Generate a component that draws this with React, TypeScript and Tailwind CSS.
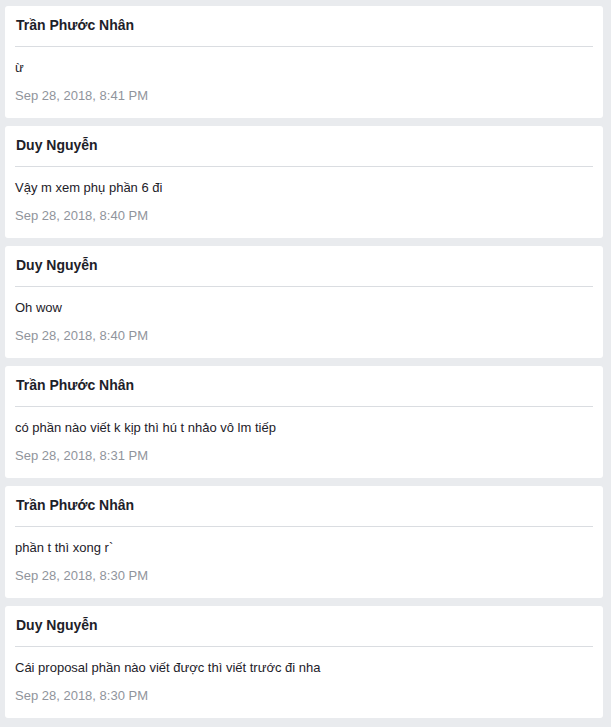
type Message = {
  author: string;
  text: string;
  time: string;
};

const messages: Message[] = [
  { author: "Trần Phước Nhân", text: "ừ", time: "Sep 28, 2018, 8:41 PM" },
  { author: "Duy Nguyễn", text: "Vậy m xem phụ phần 6 đi", time: "Sep 28, 2018, 8:40 PM" },
  { author: "Duy Nguyễn", text: "Oh wow", time: "Sep 28, 2018, 8:40 PM" },
  {
    author: "Trần Phước Nhân",
    text: "có phần nào viết k kịp thì hú t nhảo vô lm tiếp",
    time: "Sep 28, 2018, 8:31 PM",
  },
  { author: "Trần Phước Nhân", text: "phần t thì xong r`", time: "Sep 28, 2018, 8:30 PM" },
  {
    author: "Duy Nguyễn",
    text: "Cái proposal phần nào viết được thì viết trước đi nha",
    time: "Sep 28, 2018, 8:30 PM",
  },
];

function MessageCard({ message }: { message: Message }) {
  return (
    <div className="h-[112px] rounded-[3px] bg-white px-[10px] pt-[10px]">
      <div className="pl-px text-[14px] font-bold leading-[18px] text-[#1d2129]">
        {message.author}
      </div>
      <div className="mt-[12px] h-px bg-[#dadde1]" />
      <div className="mt-[12px] text-[13px] leading-[17px] text-[#1d2129]">
        {message.text}
      </div>
      <div className="mt-[11px] text-[13px] leading-[17px] text-[#90949c]">
        {message.time}
      </div>
    </div>
  );
}

export default function App() {
  return (
    <div
      className="min-h-[727px] bg-[#e9ebee] pb-[9px] pl-[5px] pr-[8px] pt-[6px]"
      style={{ fontFamily: '"Liberation Sans", Arial, sans-serif' }}
    >
      <div className="flex flex-col gap-[8px]">
        {messages.map((m, i) => (
          <MessageCard key={i} message={m} />
        ))}
      </div>
    </div>
  );
}
